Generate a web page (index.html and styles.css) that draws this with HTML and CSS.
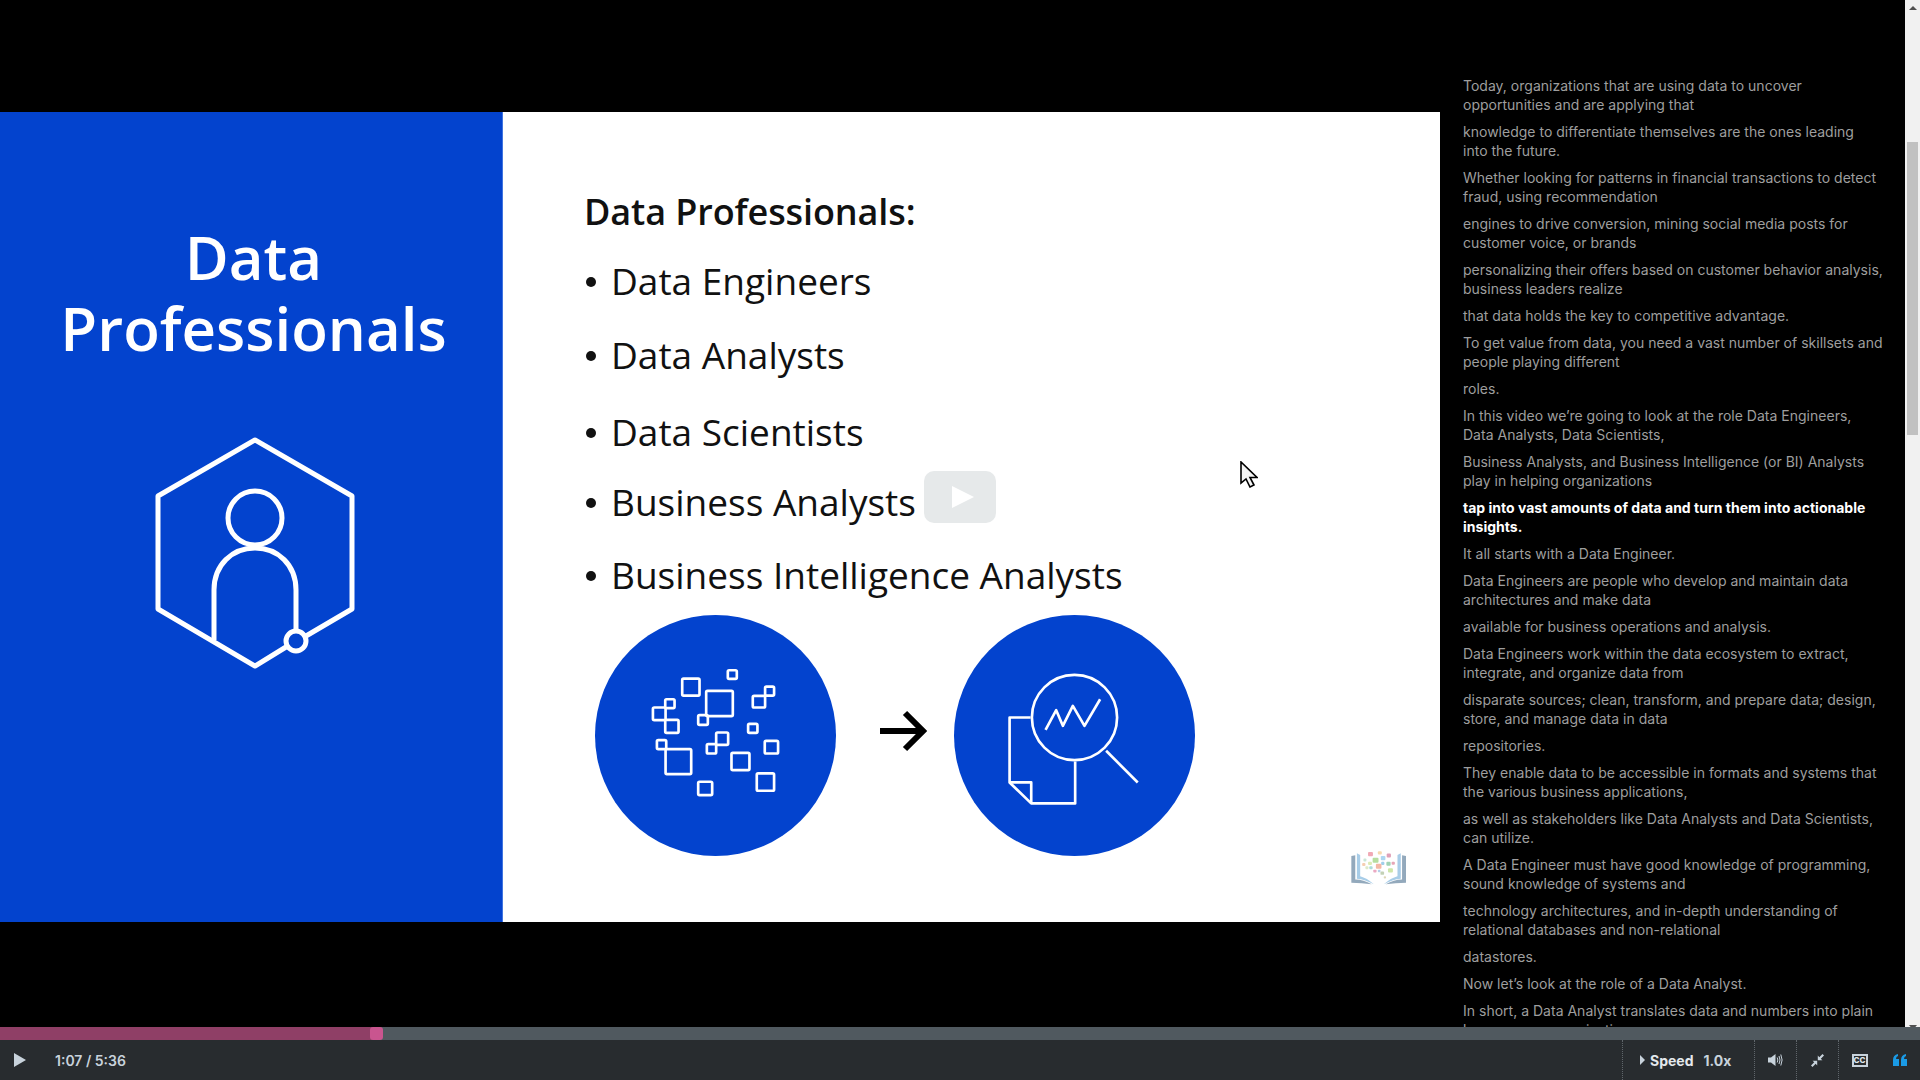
FILE: index.html
```html
<!DOCTYPE html>
<html lang="en">
<head>
	<meta charset="UTF-8">
	<title>Data Professionals</title>
	<link rel="stylesheet" href="styles.css">
</head>
<body>
	<div id="player">
		<div id="main">
			<div id="stage">
				<div id="slide">
					<div id="side">
						<h1>Data Professionals</h1>
						<svg class="hex" viewBox="150 432 210 242">
							<path d="M306 636 L352 609 V496 L255 440 L158 496 V609 L255 666 L286 647"/>
							<circle cx="255" cy="518" r="27"/>
							<path d="M214 640 V590 C214 565 232 548 255 548 C278 548 296 565 296 590 V631"/>
							<circle cx="296" cy="641" r="10"/>
						</svg>
					</div>
					<div id="content">
						<h2>Data Professionals:</h2>
						<ul id="roles">
							<li>Data Engineers</li>
							<li class="gap-d">Data Analysts</li>
							<li class="gap-b">Data Scientists</li>
							<li class="gap-c">Business Analysts</li>
							<li class="gap-a">Business Intelligence Analysts</li>
						</ul>
						<div id="flow">
							<svg class="disc" viewBox="46 42 724 724">
								<circle cx="408" cy="404" r="362" class="disc-bg"/>
								<g class="lines">
									<rect x="308" y="233" width="52" height="51" rx="4"/>
									<rect x="445" y="208" width="27" height="26" rx="4"/>
									<rect x="380" y="270" width="80" height="76" rx="4"/>
									<rect x="356" y="343" width="29" height="29" rx="4"/>
									<rect x="520" y="285" width="37" height="35" rx="4"/>
									<rect x="557" y="257" width="27" height="27" rx="4"/>
									<rect x="257" y="295" width="28" height="27" rx="4"/>
									<rect x="220" y="320" width="38" height="38" rx="4"/>
									<rect x="257" y="357" width="40" height="39" rx="4"/>
									<rect x="506" y="369" width="28" height="27" rx="4"/>
									<rect x="232" y="418" width="28" height="27" rx="4"/>
									<rect x="258" y="445" width="77" height="75" rx="4"/>
									<rect x="382" y="430" width="28" height="28" rx="4"/>
									<rect x="410" y="395" width="36" height="37" rx="4"/>
									<rect x="456" y="456" width="54" height="52" rx="4"/>
									<rect x="556" y="420" width="40" height="38" rx="4"/>
									<rect x="532" y="518" width="52" height="52" rx="4"/>
									<rect x="356" y="543" width="42" height="40" rx="4"/>
								</g>
							</svg>
							<svg class="arrow" viewBox="0 0 47 42">
								<path d="M0 21 H43 M25 3 L43 21 L25 39"/>
							</svg>
							<svg class="disc" viewBox="283 42 724 724">
								<circle cx="645" cy="404" r="362" class="disc-bg"/>
								<g class="lines">
									<circle cx="645" cy="350" r="128"/>
									<path d="M740 450 L835 545"/>
									<path d="M558 387 L590 328 L610 375 L640 315 L675 375 L722 295"/>
									<path d="M513 350 H450 V545 L515 608 H647 V482"/>
									<path d="M450 545 H515 V608"/>
								</g>
							</svg>
						</div>
					</div>
					<div id="play-badge"><span></span></div>
					<svg id="pointer" viewBox="0 0 18 27">
						<path d="M1 1 V22 L6 18 L10 26 L14 24 L10 16.5 L17 16.5 Z"/>
					</svg>
					<svg id="logo" viewBox="90 60 175 110">
						<path class="cover" d="M93 78 L105 76 V150 Q130 150 155 165 Q125 160 93 160 Z"/>
						<path class="cover" d="M260 78 L248 76 V150 Q223 150 198 165 Q228 160 260 160 Z"/>
						<path class="page" d="M110 70 L120 75 V140 Q140 145 162 165 Q135 150 110 148 Z"/>
						<path class="page" d="M244 70 L234 75 V140 Q214 145 192 165 Q219 150 244 148 Z"/>
						<g class="dots">
							<rect x="144" y="66" width="15" height="13" rx="3" fill="#ef9aa8"/>
							<rect x="174" y="64" width="12" height="10" rx="3" fill="#f4d3a0"/>
							<rect x="201" y="71" width="13" height="12" rx="3" fill="#d990ac"/>
							<rect x="158" y="84" width="18" height="15" rx="3" fill="#a9d88e"/>
							<rect x="183" y="78" width="14" height="13" rx="3" fill="#9fd0ee"/>
							<rect x="130" y="86" width="9" height="9" rx="3" fill="#bfe3d0"/>
							<rect x="126" y="100" width="10" height="9" rx="3" fill="#f3c6a5"/>
							<rect x="144" y="96" width="12" height="10" rx="3" fill="#d6e8a8"/>
							<rect x="184" y="96" width="10" height="10" rx="3" fill="#8fc7e8"/>
							<rect x="200" y="96" width="13" height="12" rx="3" fill="#8fcaa8"/>
							<rect x="216" y="96" width="10" height="9" rx="3" fill="#e297a9"/>
							<rect x="168" y="102" width="17" height="15" rx="3" fill="#f2ab95"/>
							<rect x="136" y="110" width="9" height="9" rx="3" fill="#d9e6c0"/>
							<rect x="148" y="110" width="10" height="9" rx="3" fill="#9fd6d2"/>
							<rect x="160" y="120" width="10" height="9" rx="3" fill="#e89ab8"/>
							<rect x="174" y="120" width="8" height="8" rx="3" fill="#a8c8e8"/>
							<rect x="205" y="116" width="15" height="13" rx="3" fill="#c5e29a"/>
							<rect x="182" y="126" width="11" height="10" rx="3" fill="#b9c9a8"/>
							<rect x="192" y="140" width="7" height="7" rx="3" fill="#d8cfa8"/>
						</g>
					</svg>
				</div>
			</div>
			<div id="transcript">
				<p>Today, organizations that are using data to uncover opportunities and are applying that</p>
				<p>knowledge to differentiate themselves are the ones leading<br>into the future.</p>
				<p>Whether looking for patterns in financial transactions to detect fraud, using recommendation</p>
				<p>engines to drive conversion, mining social media posts for customer voice, or brands</p>
				<p>personalizing their offers based on customer behavior analysis, business leaders realize</p>
				<p>that data holds the key to competitive advantage.</p>
				<p>To get value from data, you need a vast number of skillsets and people playing different</p>
				<p>roles.</p>
				<p>In this video we’re going to look at the role Data Engineers, Data Analysts, Data Scientists,</p>
				<p>Business Analysts, and Business Intelligence (or BI) Analysts play in helping organizations</p>
				<p class="current">tap into vast amounts of data and turn them into actionable insights.</p>
				<p>It all starts with a Data Engineer.</p>
				<p>Data Engineers are people who develop and maintain data architectures and make data</p>
				<p>available for business operations and analysis.</p>
				<p>Data Engineers work within the data ecosystem to extract, integrate, and organize data from</p>
				<p>disparate sources; clean, transform, and prepare data; design, store, and manage data in data</p>
				<p>repositories.</p>
				<p>They enable data to be accessible in formats and systems that the various business applications,</p>
				<p>as well as stakeholders like Data Analysts and Data Scientists, can utilize.</p>
				<p>A Data Engineer must have good knowledge of programming, sound knowledge of systems and</p>
				<p>technology architectures, and in-depth understanding of relational databases and non-relational</p>
				<p>datastores.</p>
				<p>Now let’s look at the role of a Data Analyst.</p>
				<p>In short, a Data Analyst translates data and numbers into plain language so organizations</p>
			</div>
			<div id="scrollbar">
				<span id="scroll-up"></span>
				<div id="thumb"></div>
				<span id="scroll-down"></span>
			</div>
		</div>
		<div id="progress">
			<div id="played"></div>
			<div id="handle"></div>
		</div>
		<div id="controls">
			<button class="play-btn"><span></span></button>
			<span id="time">1:07 / 5:36</span>
			<div id="right">
				<div class="ctrl speed">
					<i></i><b>Speed</b><b class="rate">1.0x</b>
				</div>
				<div class="ctrl icon">
					<svg width="15" height="14" viewBox="0 0 15 14">
						<path class="solid" d="M0 4.5 H3 L7.5 1 V13 L3 9.5 H0 Z"/>
						<path class="thin" d="M9.2 4.5 Q10.5 7 9.2 9.5 M11 3 Q13 7 11 11 M12.8 1.5 Q15.4 7 12.8 12.5"/>
					</svg>
				</div>
				<div class="ctrl icon">
					<svg width="13" height="13" viewBox="0 0 13 13">
						<path class="solid" d="M0 11.5 L3.2 8.3 L1.6 6.8 H6.2 V11.4 L4.7 9.8 L1.5 13 Z"/>
						<path class="solid" d="M13 1.5 L9.8 4.7 L11.4 6.2 H6.8 V1.6 L8.3 3.2 L11.5 0 Z"/>
					</svg>
				</div>
				<div class="ctrl icon">
					<span class="cc">CC</span>
				</div>
				<div class="ctrl quote">
					<svg width="14" height="12" viewBox="0 0 14 12">
						<path d="M0 6 Q0 1 5 0 V2 Q3 2.6 3 5 H6 V12 H0 Z M8 6 Q8 1 13 0 V2 Q11 2.6 11 5 H14 V12 H8 Z"/>
					</svg>
				</div>
			</div>
		</div>
	</div>
</body>
</html>
```

FILE: styles.css
```css
*{
	margin: 0;
	padding: 0;
	box-sizing: border-box;
}
html, body{
	height: 100%;
	overflow: hidden;
	background: #000;
}
ul{
	list-style: none;
}
svg{
	display: block;
}
#player{
	display: flex;
	flex-direction: column;
	height: 1080px;
}
#main{
	display: flex;
	height: 1027px;
	overflow: hidden;
}
#stage{
	width: 1440px;
	flex: none;
	padding-top: 112px;
}
#slide{
	position: relative;
	display: flex;
	height: 810px;
	background: #fff;
	font-family: "Open Sans", sans-serif;
	color: #111;
}
#side{
	width: 503px;
	flex: none;
	background: #0343ce;
	border-right: 1px solid #3f74e0;
	padding-top: 110px;
	display: flex;
	flex-direction: column;
	align-items: center;
}
#side h1{
	color: #fff;
	font-size: 60px;
	font-weight: 600;
	line-height: 71px;
	text-align: center;
	width: 420px;
	margin-left: 5px;
}
.hex{
	width: 210px;
	height: 242px;
	margin-top: 68px;
	margin-left: 8px;
	fill: none;
	stroke: #fff;
	stroke-width: 5;
	stroke-linejoin: round;
}
#content{
	flex: 1;
	padding: 78px 0 0 81px;
}
#content h2{
	font-size: 36px;
	font-weight: 600;
	line-height: 44px;
	letter-spacing: -0.1px;
}
#roles{
	margin-top: 25px;
	font-size: 37px;
	line-height: 44px;
}
#roles li{
	position: relative;
	padding-left: 27px;
}
#roles li::before{
	content: "";
	position: absolute;
	left: 2px;
	top: 18px;
	width: 10px;
	height: 10px;
	border-radius: 50%;
	background: #111;
}
#roles .gap-a{
	margin-top: 29px;
}
#roles .gap-b{
	margin-top: 33px;
}
#roles .gap-c{
	margin-top: 26px;
}
#roles .gap-d{
	margin-top: 30px;
}
#flow{
	display: flex;
	align-items: center;
	margin: 18px 0 0 11px;
}
.disc{
	width: 241px;
	height: 241px;
	flex: none;
}
.disc-bg{
	fill: #0343ce;
}
.lines{
	fill: none;
	stroke: #fff;
	stroke-width: 8;
	stroke-linejoin: round;
}
.arrow{
	width: 47px;
	height: 42px;
	margin: 0 27px 9px 44px;
	fill: none;
	stroke: #000;
	stroke-width: 6;
}
#play-badge{
	position: absolute;
	left: 924px;
	top: 359px;
	width: 72px;
	height: 52px;
	border-radius: 10px;
	background: #e6e9ea;
	display: flex;
	align-items: center;
	justify-content: center;
}
#play-badge span{
	width: 0;
	height: 0;
	margin-left: 5px;
	border-left: 22px solid #fff;
	border-top: 11px solid transparent;
	border-bottom: 11px solid transparent;
}
#pointer{
	position: absolute;
	left: 1240px;
	top: 349px;
	width: 18px;
	height: 27px;
	fill: #f4f4f4;
	stroke: #000;
	stroke-width: 1.6;
}
#logo{
	position: absolute;
	left: 1350px;
	top: 738px;
	width: 58px;
	height: 36px;
}
.cover{
	fill: #93a9bc;
}
.page{
	fill: #a8cde8;
}
.dots rect{
	opacity: .85;
}

/* transcript */
#transcript{
	flex: 1;
	padding: 76px 21px 0 23px;
	font-family: Inter, sans-serif;
	font-size: 14px;
	line-height: 19px;
	letter-spacing: 0.01px;
	color: #9e9e9e;
}
#transcript p{
	margin-bottom: 8px;
}
#transcript .current{
	color: #fff;
	font-weight: 700;
}
#scrollbar{
	position: relative;
	width: 15px;
	flex: none;
	background: #f1f1f1;
	padding: 142px 2px 0;
}
#thumb{
	height: 293px;
	background: #c1c1c1;
}
#scroll-up{
	position: absolute;
	left: 4px;
	top: 6px;
	border-bottom: 4px solid #505050;
	border-left: 4px solid transparent;
	border-right: 4px solid transparent;
}
#scroll-down{
	position: absolute;
	left: 4px;
	bottom: -3px;
	border-top: 5px solid #505050;
	border-left: 4px solid transparent;
	border-right: 4px solid transparent;
}

/* progress */
#progress{
	position: relative;
	height: 13px;
	background: #50595f;
}
#played{
	width: 376px;
	height: 100%;
	background: #8f3f66;
}
#handle{
	position: absolute;
	left: 370px;
	top: 0;
	width: 13px;
	height: 13px;
	border-radius: 3px;
	background: #c9558f;
}

/* controls */
#controls{
	display: flex;
	align-items: center;
	height: 40px;
	background: #282c2f;
	font-family: Inter, sans-serif;
	color: #c8d3dc;
}
.play-btn{
	width: 55px;
	height: 40px;
	flex: none;
	border: none;
	background: none;
	padding-left: 14px;
	display: flex;
	align-items: center;
}
.play-btn span{
	width: 0;
	height: 0;
	border-left: 12px solid #c8d3dc;
	border-top: 7px solid transparent;
	border-bottom: 7px solid transparent;
}
#time{
	font-size: 14px;
	font-weight: 600;
}
#right{
	display: flex;
	height: 40px;
	margin-left: auto;
}
.ctrl{
	display: flex;
	align-items: center;
	justify-content: center;
	height: 40px;
	border-left: 1px dotted #60666b;
}
.icon{
	width: 42px;
}
.speed{
	width: 132px;
	padding-left: 17px;
	justify-content: flex-start;
	font-size: 14px;
}
.speed i{
	width: 0;
	height: 0;
	border-left: 5px solid #c8d3dc;
	border-top: 5px solid transparent;
	border-bottom: 5px solid transparent;
	margin-right: 5px;
}
.speed b{
	color: #e4e9ed;
	font-weight: 700;
}
.speed .rate{
	margin-left: 10px;
	color: #c8d3dc;
}
.solid{
	fill: #c8d3dc;
}
.thin{
	fill: none;
	stroke: #c8d3dc;
	stroke-width: 1;
}
.cc{
	width: 16px;
	height: 13px;
	border: 2px solid #c8d3dc;
	background: #282c2f;
	color: #dfe5ea;
	font-size: 8px;
	font-weight: 800;
	line-height: 9px;
	text-align: center;
}
.quote{
	border-left: none;
	width: 40px;
	fill: #1a9be6;
	justify-content: flex-start;
	padding-left: 13px;
}
```
